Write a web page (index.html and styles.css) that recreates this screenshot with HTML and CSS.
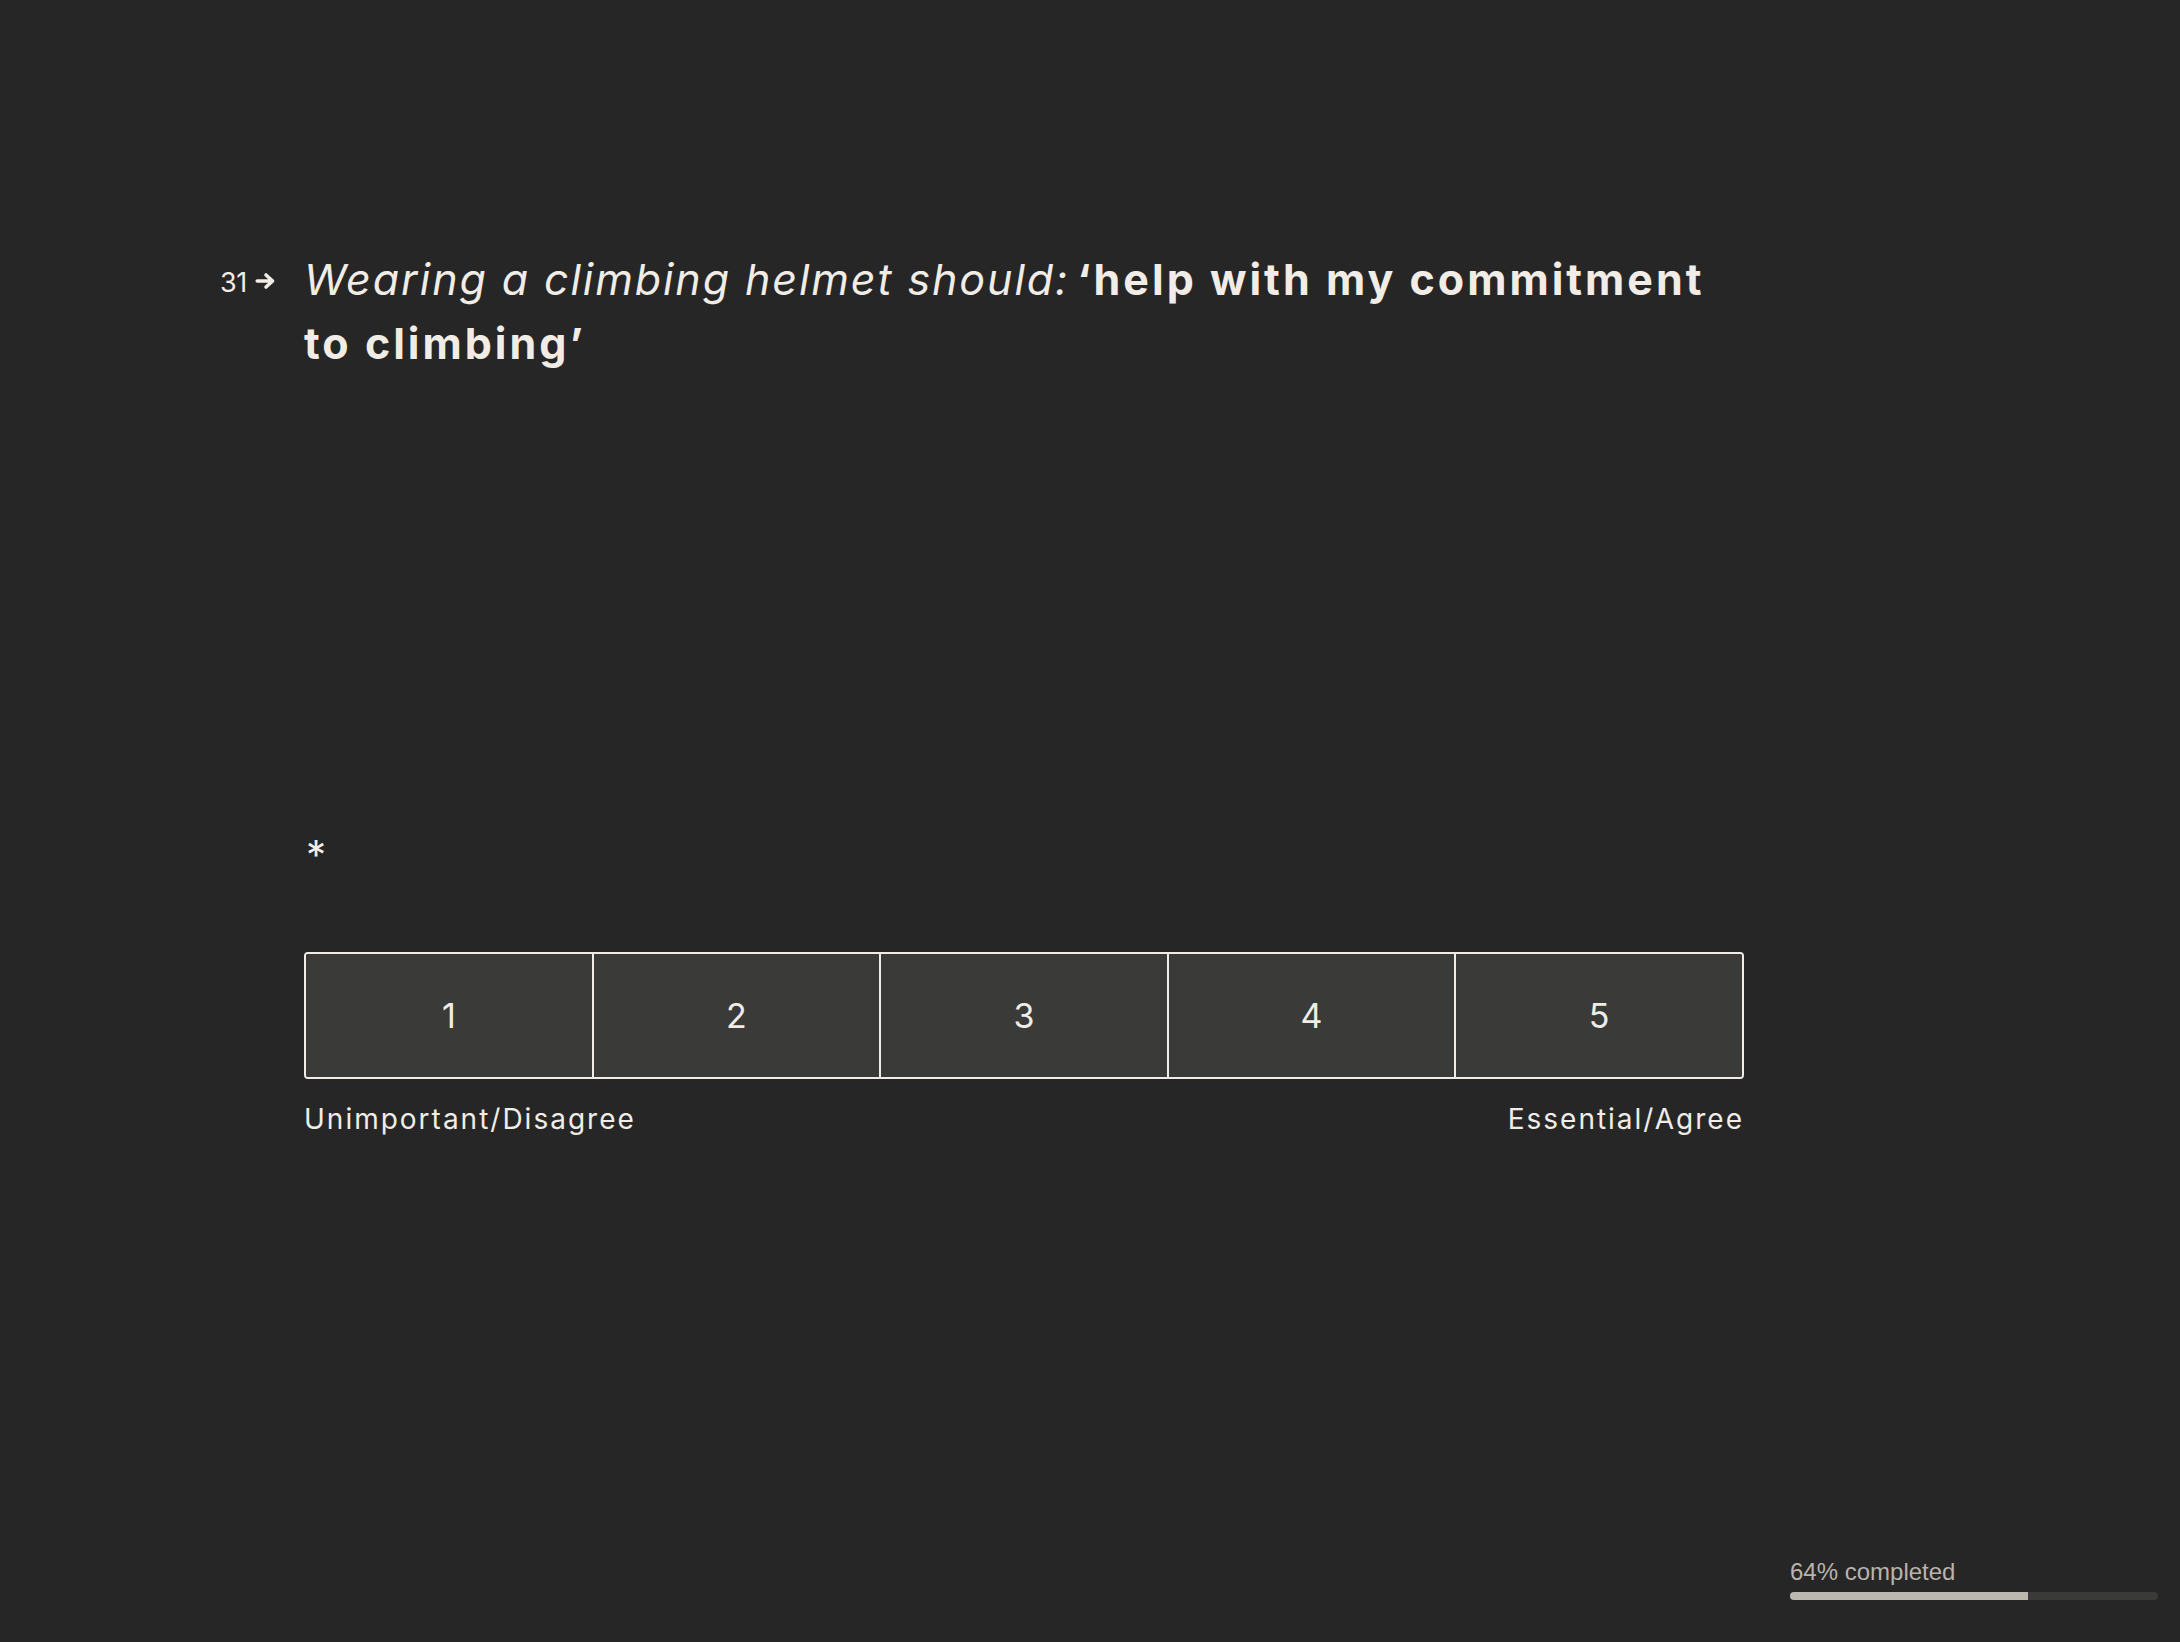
FILE: index.html
```html
<!DOCTYPE html>
<html lang="en">
<head>
<meta charset="utf-8">
<title>Question 31</title>
<link rel="stylesheet" href="styles.css">
</head>
<body>
<main class="page">
  <section class="question">
    <div class="qnum">31<svg class="arrow" viewBox="0 0 20 16" width="22" height="18"><path d="M2 8h14M10 2.5l6 5.5-6 5.5" fill="none" stroke="currentColor" stroke-width="3.2" stroke-linecap="round" stroke-linejoin="round"/></svg></div>
    <div class="qbody">
      <h1 class="qtext"><em>Wearing a climbing helmet should:</em> <strong>‘help with my commitment to climbing’</strong></h1>
      <div class="required">*</div>
      <div class="scale">
        <button class="cell">1</button>
        <button class="cell">2</button>
        <button class="cell">3</button>
        <button class="cell">4</button>
        <button class="cell">5</button>
      </div>
      <div class="labels">
        <span>Unimportant/Disagree</span>
        <span>Essential/Agree</span>
      </div>
    </div>
  </section>
  <footer class="progress">
    <div class="progress-text">64% completed</div>
    <div class="track"><div class="fill" style="width:64.7%"></div></div>
  </footer>
</main>
</body>
</html>
```
FILE: styles.css
```css
html, body {
  margin: 0;
  padding: 0;
  background: #262626;
}
body {
  font-family: Inter, "Open Sans", sans-serif;
  color: #f1ede6;
}
.page {
  min-height: 1642px;
  display: flex;
  flex-direction: column;
}
.question {
  display: flex;
  margin-top: 247px;
  margin-left: 220px;
}
.qnum {
  width: 84px;
  display: flex;
  align-items: flex-start;
  gap: 8px;
  font-size: 27px;
  line-height: 1;
  padding-top: 22px;
  letter-spacing: -0.5px;
}
.arrow {
  margin-top: 3px;
}
.qbody {
  width: 1440px;
}
.qtext {
  margin: 0;
  font-size: 43px;
  line-height: 64px;
  font-weight: 400;
  letter-spacing: 1.9px;
}
.qtext em {
  font-weight: 400;
}
.qtext strong {
  font-weight: 700;
  letter-spacing: 3px;
  margin-left: -6px;
}
.required {
  margin-top: 465px;
  font-size: 40px;
  line-height: 30px;
  padding-left: 2px;
}
.scale {
  margin-top: 82px;
  display: flex;
  height: 123px;
  border: 2px solid #f1ede6;
  border-radius: 4px;
  overflow: hidden;
  background: #3a3a38;
}
.cell {
  flex: 1;
  background: #3a3a38;
  border: none;
  border-left: 2px solid #f1ede6;
  color: #f1ede6;
  font-family: Inter, "Open Sans", sans-serif;
  font-size: 34px;
  font-weight: 400;
  padding: 0;
}
.cell:first-child {
  border-left: none;
}
.labels {
  margin-top: 24px;
  display: flex;
  justify-content: space-between;
  font-size: 28px;
  line-height: 1.2;
  letter-spacing: 2px;
}
.progress {
  margin-top: auto;
  margin-bottom: 42px;
  align-self: flex-end;
  margin-right: 22px;
  width: 368px;
}
.progress-text {
  font-family: "Liberation Sans", Arial, sans-serif;
  font-size: 24px;
  color: #b8b4ad;
}
.track {
  margin-top: 6px;
  height: 8px;
  border-radius: 4px;
  background: #3a3a38;
  overflow: hidden;
}
.fill {
  height: 100%;
  background: #bcb8b0;
}
```
